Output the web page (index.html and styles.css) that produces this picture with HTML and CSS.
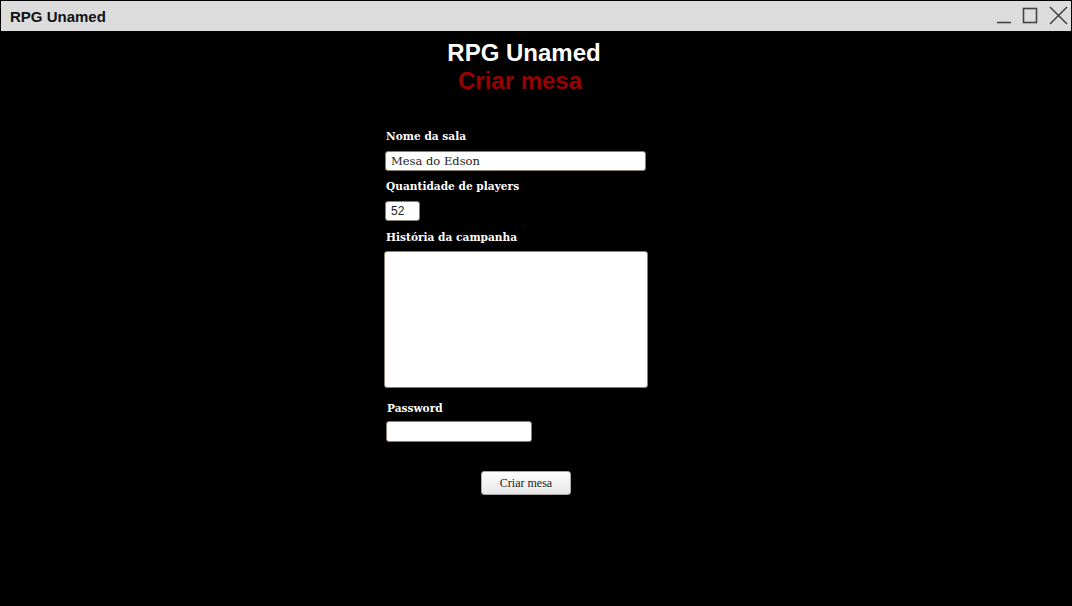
FILE: index.html
```html
<!DOCTYPE html>
<html lang="pt">
<head>
<meta charset="utf-8">
<title>RPG Unamed</title>
<link rel="stylesheet" href="styles.css">
</head>
<body>
<div class="window">
  <div class="titlebar">
    <span class="title">RPG Unamed</span>
    <div class="controls">
      <svg class="ctl" width="18" height="18" viewBox="0 0 18 18"><path d="M2 15.5H16" stroke="#444" stroke-width="1.6" fill="none"/></svg>
      <svg class="ctl" width="18" height="18" viewBox="0 0 18 18"><rect x="2.5" y="1.5" width="13" height="14" stroke="#444" stroke-width="1.6" fill="none"/></svg>
      <svg class="ctl" width="22" height="20" viewBox="0 0 22 20"><path d="M3 1L20 18M20 1L3 18" stroke="#444" stroke-width="1.6" fill="none"/></svg>
    </div>
  </div>
  <main class="main">
    <h1 class="app-name">RPG Unamed</h1>
    <h2 class="page-title">Criar mesa</h2>
    <form class="form">
      <label class="label">Nome da sala</label>
      <input class="field field-name" type="text" value="Mesa do Edson">
      <label class="label">Quantidade de players</label>
      <input class="field field-num" type="text" value="52">
      <label class="label label-story">História da campanha</label>
      <textarea class="field field-story"></textarea>
      <label class="label label-pw">Password</label>
      <input class="field field-pw" type="password">
      <div class="actions"><button class="btn" type="button">Criar mesa</button></div>
    </form>
  </main>
</div>
</body>
</html>
```
FILE: styles.css
```css
* { box-sizing: border-box; }
html, body { margin: 0; padding: 0; background: #000; }
.window {
  width: 1072px;
  height: 606px;
  border: 1px solid #000;
  background: #000;
  display: flex;
  flex-direction: column;
}
.titlebar {
  height: 30px;
  background: #dcdcdc;
  display: flex;
  align-items: center;
  justify-content: space-between;
  padding: 0 2px 0 9px;
}
.title {
  font-family: "Liberation Sans", Arial, sans-serif;
  font-size: 15px;
  font-weight: bold;
  color: #111;
  padding-top: 1px;
}
.controls {
  display: flex;
  align-items: center;
  gap: 8px;
}
.ctl { display: block; }
.main {
  flex: 1;
  display: flex;
  flex-direction: column;
  align-items: center;
  padding-right: 24px;
}
.app-name {
  margin: 8px 0 0;
  font-family: "Liberation Sans", Arial, sans-serif;
  font-size: 24px;
  font-weight: bold;
  line-height: 28px;
  color: #fff;
}
.page-title {
  margin: 0;
  font-family: "Liberation Sans", Arial, sans-serif;
  font-size: 24px;
  font-weight: bold;
  line-height: 28px;
  color: #990000;
  padding-right: 8px;
}
.form {
  width: 280px;
  margin-top: 34px;
  display: flex;
  flex-direction: column;
  align-items: flex-start;
  padding-left: 1px;
}
.label {
  font-family: "DejaVu Serif", Georgia, serif;
  font-size: 10.6px;
  font-weight: bold;
  color: #fff;
  line-height: 14px;
  margin-left: 1px;
  margin-bottom: 8px;
}
.field {
  background: #fff;
  border: 1px solid #8a7f6f;
  border-radius: 3px;
  margin: 0 0 8px;
  padding: 0 5px;
  outline: none;
}
.field-name {
  width: 261px;
  height: 20px;
  font-family: "DejaVu Serif", serif;
  font-size: 11.5px;
  color: #222;
}
.field-num {
  width: 35px;
  height: 20px;
  font-family: "Liberation Sans", Arial, sans-serif;
  font-size: 12px;
  color: #222;
  margin-bottom: 9px;
}
.label-story { margin-bottom: 7px; }
.field-story {
  width: 264px;
  height: 137px;
  margin-left: -1px;
  resize: none;
  margin-bottom: 13px;
}
.label-pw { margin-left: 2px; margin-bottom: 6px; }
.field-pw {
  width: 146px;
  height: 21px;
  margin-left: 1px;
}
.actions {
  width: 100%;
  display: flex;
  justify-content: center;
  margin-top: 21px;
  padding-left: 3px;
}
.btn {
  width: 90px;
  height: 24px;
  font-family: "Liberation Serif", "Times New Roman", serif;
  font-size: 12px;
  color: #222;
  border: 1px solid #a9a9a9;
  border-radius: 3px;
  background: linear-gradient(#ffffff, #e6e6e6);
  padding: 0;
}
```
